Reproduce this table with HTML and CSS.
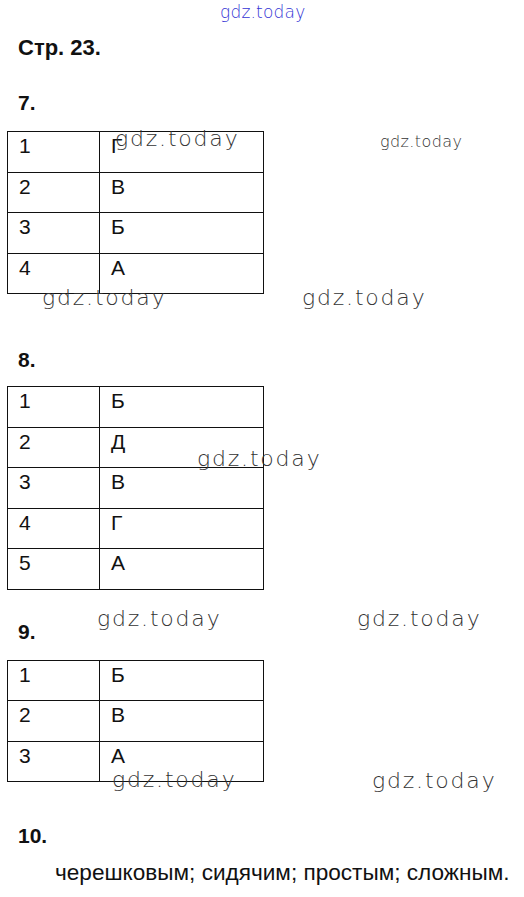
FILE: index.html
```html
<!DOCTYPE html>
<html lang="ru">
<head>
<meta charset="utf-8">
<title>Стр. 23</title>
<link rel="stylesheet" href="styles.css">
</head>
<body>
<div class="page">
  <div class="wm wm-top">gdz.today</div>

  <h1 class="title">Стр. 23.</h1>

  <h2 class="num n7">7.</h2>
  <table class="answers t7">
    <tr><td>1</td><td>Г</td></tr>
    <tr><td>2</td><td>В</td></tr>
    <tr><td>3</td><td>Б</td></tr>
    <tr><td>4</td><td>А</td></tr>
  </table>

  <h2 class="num n8">8.</h2>
  <table class="answers t8">
    <tr><td>1</td><td>Б</td></tr>
    <tr><td>2</td><td>Д</td></tr>
    <tr><td>3</td><td>В</td></tr>
    <tr><td>4</td><td>Г</td></tr>
    <tr><td>5</td><td>А</td></tr>
  </table>

  <h2 class="num n9">9.</h2>
  <table class="answers t9">
    <tr><td>1</td><td>Б</td></tr>
    <tr><td>2</td><td>В</td></tr>
    <tr><td>3</td><td>А</td></tr>
  </table>

  <h2 class="num n10">10.</h2>
  <p class="answer-text">черешковым; сидячим; простым; сложным.</p>

  <div class="wm wm-big" style="left:115px;top:128px">gdz.today</div>
  <div class="wm wm-small" style="left:380px;top:134px">gdz.today</div>
  <div class="wm wm-big" style="left:42px;top:287px">gdz.today</div>
  <div class="wm wm-big" style="left:302px;top:287px">gdz.today</div>
  <div class="wm wm-big" style="left:197px;top:448px">gdz.today</div>
  <div class="wm wm-big" style="left:97px;top:608px">gdz.today</div>
  <div class="wm wm-big" style="left:357px;top:608px">gdz.today</div>
  <div class="wm wm-big" style="left:112px;top:769px">gdz.today</div>
  <div class="wm wm-big" style="left:372px;top:770px">gdz.today</div>
</div>
</body>
</html>
```

FILE: styles.css
```css
html, body {
  margin: 0;
  padding: 0;
  background: #fff;
}

.page {
  position: relative;
  width: 524px;
  height: 897px;
  overflow: hidden;
  font-family: "Liberation Sans", Arial, sans-serif;
  color: #111;
}

.title,
.num {
  margin: 0;
  padding-left: 18px;
  font-size: 21px;
  font-weight: bold;
  line-height: 20px;
}

.title {
  padding-top: 38px;
  font-size: 22px;
}

.n7 { margin-top: 35px; }
.n8 { margin-top: 56px; }
.n9 { margin-top: 32px; }
.n10 { margin-top: 44px; }

.answers {
  border-collapse: collapse;
  margin-left: 7px;
  width: 257px;
}

.t7 { margin-top: 18px; }
.t8 { margin-top: 16px; }
.t9 { margin-top: 18px; }

.answers tr {
  height: 40.5px;
}

.answers td {
  border: 1px solid #111;
  padding: 3px 0 0 11px;
  vertical-align: top;
  font-size: 21px;
  line-height: 22px;
}

.answers td:first-child {
  width: 80px;
}

.answer-text {
  margin: 15px 0 0 55px;
  font-size: 22.6px;
  line-height: 24px;
  white-space: nowrap;
}

.wm {
  position: absolute;
  font-family: "DejaVu Sans", "Open Sans", sans-serif;
  font-weight: 200;
  line-height: 1;
  white-space: nowrap;
  color: #333;
}

.wm-top {
  top: 4px;
  left: 220px;
  font-size: 17px;
  letter-spacing: 0.2px;
  color: #3535d5;
}

.wm-big {
  font-size: 22px;
  letter-spacing: 1.8px;
}

.wm-small {
  font-size: 16px;
  letter-spacing: 0.4px;
}
```
